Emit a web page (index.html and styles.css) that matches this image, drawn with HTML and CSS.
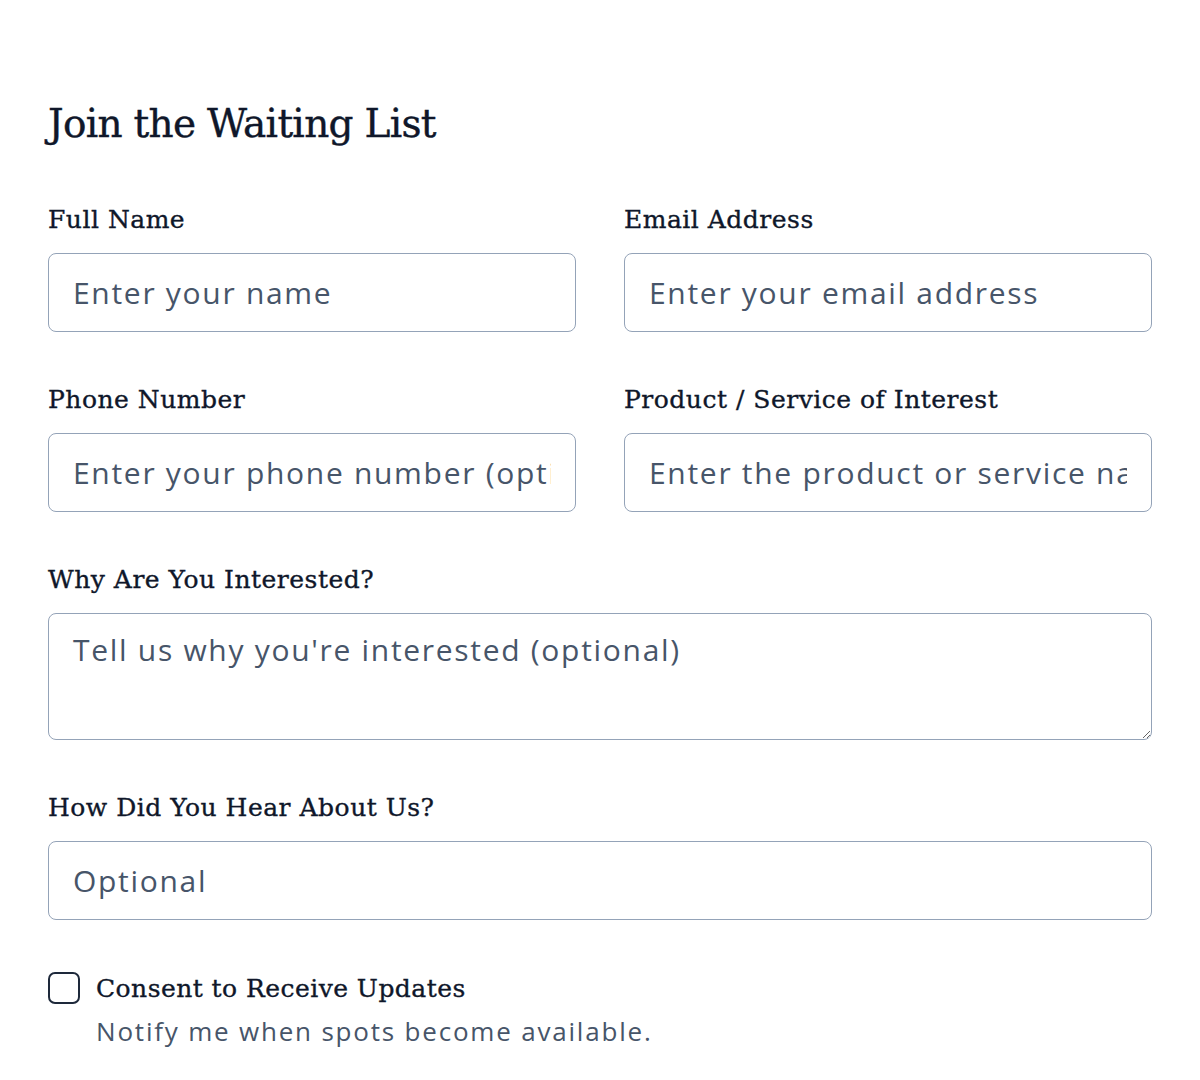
FILE: index.html
```html
<!DOCTYPE html>
<html lang="en">
<head>
<meta charset="utf-8">
<title>Join the Waiting List</title>
<link rel="stylesheet" href="styles.css">
</head>
<body>
<main class="page">
  <h1 class="title">Join the Waiting List</h1>
  <form class="form">
    <div class="grid">
      <div class="field">
        <label class="label" for="name">Full Name</label>
        <input class="input" id="name" type="text" placeholder="Enter your name">
      </div>
      <div class="field">
        <label class="label" for="email">Email Address</label>
        <input class="input" id="email" type="email" placeholder="Enter your email address">
      </div>
      <div class="field">
        <label class="label" for="phone">Phone Number</label>
        <input class="input" id="phone" type="tel" placeholder="Enter your phone number (optional)">
      </div>
      <div class="field">
        <label class="label" for="product">Product / Service of Interest</label>
        <input class="input" id="product" type="text" placeholder="Enter the product or service name">
      </div>
    </div>
    <div class="field">
      <label class="label" for="why">Why Are You Interested?</label>
      <textarea class="input textarea" id="why" placeholder="Tell us why you're interested (optional)"></textarea>
    </div>
    <div class="field">
      <label class="label" for="hear">How Did You Hear About Us?</label>
      <input class="input" id="hear" type="text" placeholder="Optional">
    </div>
    <div class="consent">
      <input class="checkbox" id="consent" type="checkbox">
      <div class="consent-text">
        <label class="consent-label" for="consent">Consent to Receive Updates</label>
        <p class="consent-desc">Notify me when spots become available.</p>
      </div>
    </div>
  </form>
</main>
</body>
</html>
```
FILE: styles.css
```css
* { box-sizing: border-box; }
html, body { margin: 0; padding: 0; background: #ffffff; }
.page {
  padding: 96px 48px 40px;
  width: 1200px;
}
.title {
  margin: 0 0 50px;
  font-family: "DejaVu Serif", serif;
  font-weight: 400;
  font-size: 39px;
  line-height: 56px;
  letter-spacing: -0.7px;
  -webkit-text-stroke: 0.4px #0f172a;
  color: #0f172a;
}
.form {
  display: flex;
  flex-direction: column;
  gap: 50px;
}
.grid {
  display: grid;
  grid-template-columns: 1fr 1fr;
  column-gap: 48px;
  row-gap: 50px;
}
.field {
  display: flex;
  flex-direction: column;
  gap: 15px;
}
.label {
  font-family: "DejaVu Serif", serif;
  font-size: 25px;
  line-height: 36px;
  letter-spacing: 0.5px;
  -webkit-text-stroke: 0.35px #0f172a;
  color: #0f172a;
}
.input {
  width: 100%;
  height: 79px;
  padding: 0 24px;
  border: 1.5px solid #94a3b8;
  border-radius: 8px;
  font-family: "Open Sans", sans-serif;
  font-size: 30px;
  letter-spacing: 1.7px;
  color: #0f172a;
  background: #fff;
  outline: none;
}
.input::placeholder { color: #475569; opacity: 1; }
.textarea {
  height: 127px;
  padding: 16px 24px;
  resize: vertical;
  line-height: 40px;
}
.consent {
  display: flex;
  align-items: flex-start;
  gap: 16px;
  margin-top: 2px;
}
.checkbox {
  appearance: none;
  -webkit-appearance: none;
  margin: 0;
  width: 32px;
  height: 32px;
  border: 2px solid #1e293b;
  border-radius: 7px;
  background: #fff;
  flex: none;
}
.consent-text { display: flex; flex-direction: column; }
.consent-label {
  font-family: "DejaVu Serif", serif;
  font-size: 25px;
  line-height: 34px;
  letter-spacing: 0.45px;
  -webkit-text-stroke: 0.35px #0f172a;
  color: #0f172a;
}
.consent-desc {
  margin: 8px 0 0;
  font-family: "Open Sans", sans-serif;
  font-size: 26px;
  letter-spacing: 1.8px;
  line-height: 34px;
  color: #475569;
}
```
